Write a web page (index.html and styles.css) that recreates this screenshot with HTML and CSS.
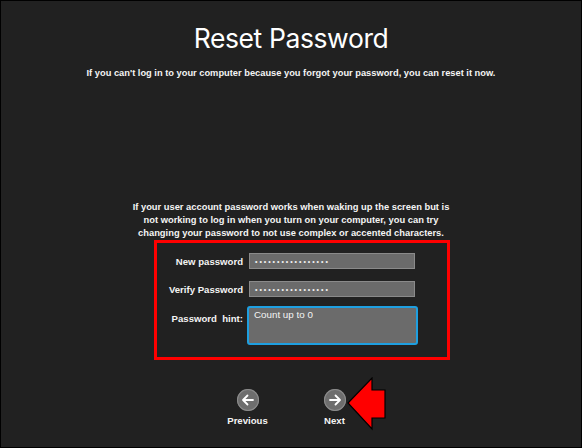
FILE: index.html
```html
<!DOCTYPE html>
<html lang="en">
<head>
<meta charset="utf-8">
<title>Reset Password</title>
<link rel="stylesheet" href="styles.css">
</head>
<body>
<div class="screen">
  <header class="head">
    <h1 class="title">Reset Password</h1>
    <p class="subtitle">If you can't log in to your computer because you forgot your password, you can reset it now.</p>
  </header>
  <p class="note">If your user account password works when waking up the screen but is<br>not working to log in when you turn on your computer, you can try<br>changing your password to not use complex or accented characters.</p>
  <div class="form-box">
    <div class="form">
      <label class="label">New password</label>
      <div class="field"><span class="dots">•••••••••••••••••</span></div>
      <label class="label">Verify Password</label>
      <div class="field"><span class="dots">•••••••••••••••••</span></div>
      <label class="label label-top">Password&nbsp; hint:</label>
      <div class="hint">Count up to 0</div>
    </div>
  </div>
  <nav class="nav">
    <div class="btn">
      <span class="circle">
        <svg width="22" height="22" viewBox="0 0 22 22"><path d="M16 11H6.5M10.5 6.5L6 11l4.5 4.5" fill="none" stroke="#fff" stroke-width="1.8" stroke-linecap="round" stroke-linejoin="round"/></svg>
      </span>
      <span class="btn-label">Previous</span>
    </div>
    <div class="btn">
      <span class="circle">
        <svg width="22" height="22" viewBox="0 0 22 22"><path d="M6 11h9.5M11.5 6.5L16 11l-4.5 4.5" fill="none" stroke="#fff" stroke-width="1.8" stroke-linecap="round" stroke-linejoin="round"/></svg>
      </span>
      <span class="btn-label">Next</span>
    </div>
  </nav>
  <svg class="pointer" width="40" height="54" viewBox="0 0 40 54"><path d="M1 26L25 1V13H38V41H25V52Z" fill="#f00" stroke="#000" stroke-width="1.2" stroke-linejoin="miter"/></svg>
</div>
</body>
</html>
```
FILE: styles.css
```css
* { box-sizing: border-box; }
html, body { margin: 0; padding: 0; background: #000; }
.screen {
  position: relative;
  width: 582px;
  height: 448px;
  border: 1px solid #000;
  background: #212121;
  color: #fff;
  font-family: "Liberation Sans", Arial, sans-serif;
  display: flex;
  flex-direction: column;
  align-items: center;
  overflow: hidden;
}
.head { display: flex; flex-direction: column; align-items: center; padding-top: 19px; }
.title {
  margin: 0;
  font-family: "Inter", "Liberation Sans", sans-serif;
  font-weight: 400;
  font-size: 26.5px;
  line-height: 36px;
  letter-spacing: -0.4px;
}
.subtitle {
  margin: 11px 0 0;
  font-size: 9.3px;
  font-weight: 700;
  line-height: 13px;
  color: #f4f4f4;
}
.note {
  margin: 121px 0 0;
  text-align: center;
  font-size: 9.35px;
  font-weight: 700;
  line-height: 13px;
  color: #f4f4f4;
}
.form-box {
  align-self: flex-start;
  margin: 0 0 0 153px;
  width: 296px;
  height: 120px;
  border: 3px solid #f00;
  padding: 10px 0 0 0;
}
.form {
  display: grid;
  grid-template-columns: 86px 166px;
  column-gap: 6px;
  grid-template-rows: 16px 16px 39px;
  row-gap: 12px;
}
.label {
  font-size: 9.6px;
  font-weight: 700;
  text-align: right;
  align-self: center;
  white-space: nowrap;
  color: #f4f4f4;
}
.label-top { align-self: start; padding-top: 7px; margin-top: -3px; }
.field {
  background: #6b6b6b;
  border: 1px solid #8a8a8a;
  height: 16px;
  display: flex;
  align-items: center;
  padding-left: 5px;
  overflow: hidden;
}
.dots {
  font-size: 7px;
  letter-spacing: 1.95px;
  color: #f2f2f2;
  line-height: 1;
}
.hint {
  margin: -3px 0 0 -2px;
  width: 171px;
  height: 39px;
  background: #6b6b6b;
  border: 2px solid #1e9fe0;
  border-radius: 3px;
  font-size: 9.8px;
  font-weight: 400;
  padding: 1px 0 0 5px;
  line-height: 12px;
  color: #f4f4f4;
}
.nav {
  display: flex;
  gap: 27px;
  margin-top: 29px;
}
.btn {
  width: 60px;
  display: flex;
  flex-direction: column;
  align-items: center;
}
.circle {
  width: 22px;
  height: 22px;
  border-radius: 50%;
  background: #6e6e6e;
  box-shadow: inset 0 0 0 1px #8c8c8c;
  display: flex;
}
.btn-label {
  margin-top: 4px;
  font-size: 9.6px;
  font-weight: 700;
  line-height: 12px;
  color: #f4f4f4;
}
.pointer {
  position: absolute;
  left: 346px;
  top: 376px;
}
```
